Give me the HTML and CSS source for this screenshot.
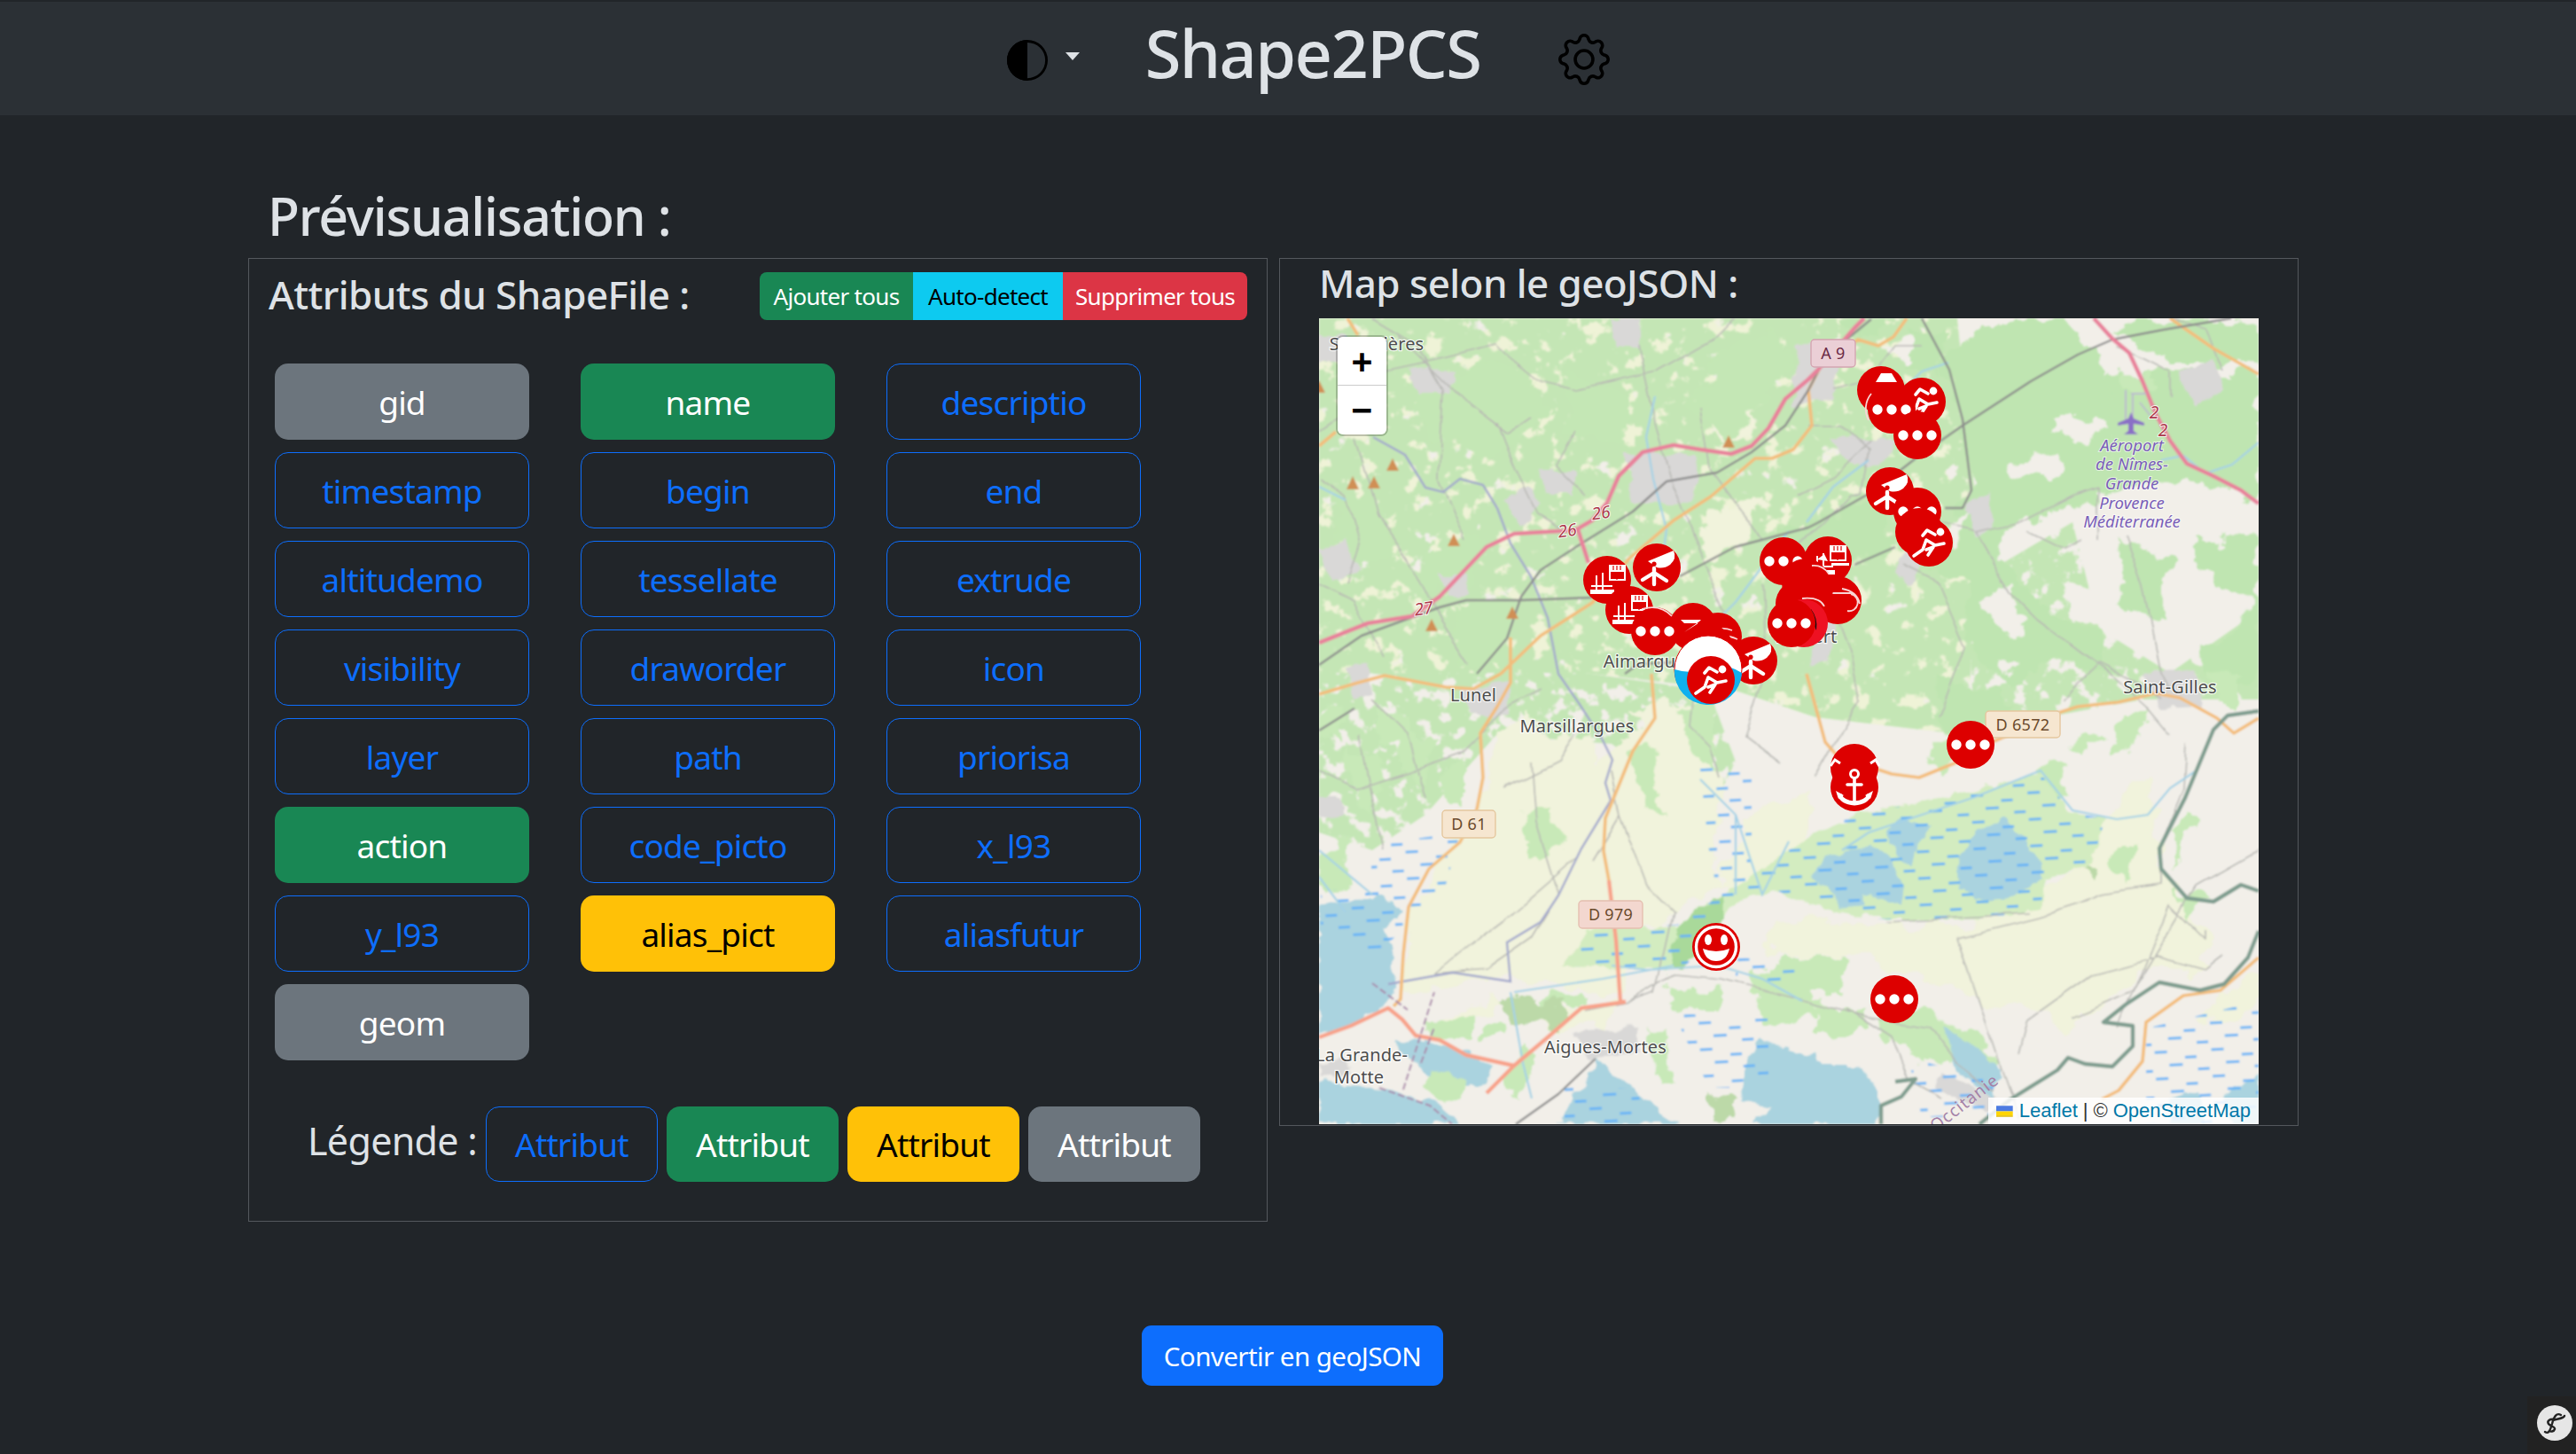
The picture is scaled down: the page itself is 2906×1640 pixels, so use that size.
FILE: index.html
```html
<!DOCTYPE html>
<html lang="fr">
<head>
<meta charset="utf-8">
<title>Shape2PCS</title>
<link rel="stylesheet" href="styles.css">
</head>
<body>
<nav class="topbar">
  <div class="theme">
    <svg class="half" viewBox="0 0 16 16" fill="currentColor"><path d="M8 1A7 7 0 1 1 8 15zM8 16A8 8 0 1 0 8 0a8 8 0 0 0 0 16zM8 1A7 7 0 1 0 8 15z" fill-rule="evenodd"/><path d="M8 0a8 8 0 0 0 0 16z"/></svg>
    <span class="caret"></span>
  </div>
  <h1 class="brand">Shape2PCS</h1>
  <svg class="gear" viewBox="0 0 16 16" fill="currentColor"><path d="M8 4.754a3.246 3.246 0 1 0 0 6.492 3.246 3.246 0 0 0 0-6.492zM5.754 8a2.246 2.246 0 1 1 4.492 0 2.246 2.246 0 0 1-4.492 0z"/><path d="M9.796 1.343c-.527-1.79-3.065-1.79-3.592 0l-.094.319a.873.873 0 0 1-1.255.52l-.292-.16c-1.64-.892-3.433.902-2.54 2.541l.159.292a.873.873 0 0 1-.52 1.255l-.319.094c-1.79.527-1.79 3.065 0 3.592l.319.094a.873.873 0 0 1 .52 1.255l-.16.292c-.892 1.64.901 3.434 2.541 2.54l.292-.159a.873.873 0 0 1 1.255.52l.094.319c.527 1.79 3.065 1.79 3.592 0l.094-.319a.873.873 0 0 1 1.255-.52l.292.16c1.64.893 3.434-.902 2.54-2.541l-.159-.292a.873.873 0 0 1 .52-1.255l.319-.094c1.79-.527 1.79-3.065 0-3.592l-.319-.094a.873.873 0 0 1-.52-1.255l.16-.292c.893-1.64-.902-3.433-2.541-2.54l-.292.159a.873.873 0 0 1-1.255-.52l-.094-.319zm-2.633.283c.246-.835 1.428-.835 1.674 0l.094.319a1.873 1.873 0 0 0 2.693 1.115l.291-.16c.764-.415 1.6.42 1.184 1.185l-.159.292a1.873 1.873 0 0 0 1.116 2.692l.318.094c.835.246.835 1.428 0 1.674l-.319.094a1.873 1.873 0 0 0-1.115 2.693l.16.291c.415.764-.42 1.6-1.185 1.184l-.291-.159a1.873 1.873 0 0 0-2.693 1.116l-.094.318c-.246.835-1.428.835-1.674 0l-.094-.319a1.873 1.873 0 0 0-2.692-1.115l-.292.16c-.764.415-1.6-.42-1.184-1.185l.159-.291A1.873 1.873 0 0 0 1.945 8.93l-.319-.094c-.835-.246-.835-1.428 0-1.674l.319-.094A1.873 1.873 0 0 0 3.06 4.377l-.16-.292c-.415-.764.42-1.6 1.185-1.184l.292.159a1.873 1.873 0 0 0 2.692-1.115l.094-.319z"/></svg>
</nav>

<main class="page">
  <h2 class="page-title">Prévisualisation :</h2>
  <div class="panels">
    <section class="panel panel-attrs">
      <header class="attrs-head">
        <h3 class="panel-title attrs-title">Attributs du ShapeFile :</h3>
        <div class="btn-group">
          <button class="sm sm-green">Ajouter tous</button><button class="sm sm-cyan">Auto-detect</button><button class="sm sm-red">Supprimer tous</button>
        </div>
      </header>
      <div class="attr-grid">
        <button class="btn btn-grey">gid</button>
        <button class="btn btn-green">name</button>
        <button class="btn btn-line">descriptio</button>
        <button class="btn btn-line">timestamp</button>
        <button class="btn btn-line">begin</button>
        <button class="btn btn-line">end</button>
        <button class="btn btn-line">altitudemo</button>
        <button class="btn btn-line">tessellate</button>
        <button class="btn btn-line">extrude</button>
        <button class="btn btn-line">visibility</button>
        <button class="btn btn-line">draworder</button>
        <button class="btn btn-line">icon</button>
        <button class="btn btn-line">layer</button>
        <button class="btn btn-line">path</button>
        <button class="btn btn-line">priorisa</button>
        <button class="btn btn-green">action</button>
        <button class="btn btn-line">code_picto</button>
        <button class="btn btn-line">x_l93</button>
        <button class="btn btn-line">y_l93</button>
        <button class="btn btn-yellow">alias_pict</button>
        <button class="btn btn-line">aliasfutur</button>
        <button class="btn btn-grey">geom</button>
      </div>
      <div class="legend">
        <span class="legend-label">Légende :</span>
        <button class="btn legend-btn btn-line">Attribut</button>
        <button class="btn legend-btn btn-green">Attribut</button>
        <button class="btn legend-btn btn-yellow">Attribut</button>
        <button class="btn legend-btn btn-grey">Attribut</button>
      </div>
    </section>

    <section class="panel panel-map">
      <h3 class="panel-title map-title">Map selon le geoJSON :</h3>
      <div class="map">
        <svg class="map-svg" viewBox="0 0 1060 909" xmlns="http://www.w3.org/2000/svg">
          <defs>
            <filter id="soft" filterUnits="userSpaceOnUse" x="0" y="0" width="1060" height="909"><feGaussianBlur stdDeviation="0.8"/></filter>
            <filter id="rough" filterUnits="userSpaceOnUse" x="0" y="0" width="1060" height="909">
              <feTurbulence type="fractalNoise" baseFrequency="0.035" numOctaves="4" seed="7" result="n"/>
              <feDisplacementMap in="SourceGraphic" in2="n" scale="34" xChannelSelector="R" yChannelSelector="G"/>
            </filter>
            <filter id="rough2" filterUnits="userSpaceOnUse" x="0" y="0" width="1060" height="909">
              <feTurbulence type="fractalNoise" baseFrequency="0.05" numOctaves="3" seed="3" result="n"/>
              <feDisplacementMap in="SourceGraphic" in2="n" scale="14" xChannelSelector="R" yChannelSelector="G"/>
            </filter>
            <filter id="rough3" filterUnits="userSpaceOnUse" x="0" y="0" width="1060" height="909">
              <feTurbulence type="fractalNoise" baseFrequency="0.02" numOctaves="2" seed="9" result="n"/>
              <feDisplacementMap in="SourceGraphic" in2="n" scale="12" xChannelSelector="R" yChannelSelector="G"/>
            </filter>
            <filter id="mosaic" filterUnits="userSpaceOnUse" x="0" y="0" width="1060" height="909">
              <feTurbulence type="fractalNoise" baseFrequency="0.05" numOctaves="5" seed="11"/>
              <feColorMatrix type="matrix" values="0 0 0 0 0.55  0 0 0 0 0.79  0 0 0 0 0.46  12 0 0 0 -3.9"/>
            </filter>
            <filter id="mosaic2" filterUnits="userSpaceOnUse" x="0" y="0" width="1060" height="909">
              <feTurbulence type="fractalNoise" baseFrequency="0.03" numOctaves="4" seed="4"/>
              <feColorMatrix type="matrix" values="0 0 0 0 0.86  0 0 0 0 0.9  0 0 0 0 0.68  12 0 0 0 -3.6"/>
            </filter>
            <filter id="mosaic3" filterUnits="userSpaceOnUse" x="0" y="0" width="1060" height="909">
              <feTurbulence type="fractalNoise" baseFrequency="0.06" numOctaves="4" seed="21"/>
              <feColorMatrix type="matrix" values="0 0 0 0 0.55  0 0 0 0 0.79  0 0 0 0 0.46  12 0 0 0 -4.4"/>
            </filter>
            <clipPath id="clipNorth"><path d="M0 0H720L740 200 735 400 730 470 560 450 470 420 300 400 0 400Z"/></clipPath>
            <clipPath id="clipMid"><path d="M0 400H300L440 420 470 500 440 560 330 480 200 470 120 560 60 600 0 580ZM850 230 880 350 960 400 1060 330 1060 430 930 430 820 450 740 470 730 300Z"/></clipPath>
            <pattern id="marsh" width="64" height="30" patternUnits="userSpaceOnUse" patternTransform="rotate(-3)">
              <rect x="2" y="5" width="14" height="2.8" class="dash"/><rect x="36" y="12" width="13" height="2.8" class="dash"/><rect x="18" y="20" width="15" height="2.8" class="dash"/><rect x="50" y="26" width="13" height="2.8" class="dash"/>
            </pattern>
            <g id="m-plain"><circle r="27" class="mk"/></g>
            <g id="m-dots"><circle r="27" class="mk"/><circle cx="-16" r="5.7" class="w"/><circle r="5.7" class="w"/><circle cx="16" r="5.7" class="w"/></g>
            <g id="m-scope"><circle r="27" class="mk"/><path class="w" d="M-10-7 19-19Q23-10 15-3 8 2 0 0Z"/><circle cx="-3" cy="-4" r="2.6" class="mk"/><path class="wl2" d="M-3 1V19M-3 6-16 14M-3 6 11 15"/></g>
            <g id="m-run"><circle r="27" class="mk"/><circle cx="13" cy="-12" r="4.4" class="w"/><path class="wl" d="M-7-8-2-14 7-9M-17 15-7 8-3-3 7 3 17 1M-3 8 5 5 -1 14"/></g>
            <g id="m-factory"><circle r="27" class="mk"/><path class="w" d="M-19 11H8V16H-19ZM-13 -5H-11V11H-13ZM-6 -8H-4V11H-6ZM-18 6H6V8H-18Z"/><path class="w" d="M2-17H21V1H2ZM4-9H19V-1H4Z" fill-rule="evenodd"/><path class="mkl" d="M7-16V-11M11-16V-11M15-16V-11M11-7V0"/></g>
            <g id="m-anchor"><circle r="27" class="mk"/><circle cy="-15" r="4.5" class="wo"/><path class="wl" d="M0-10V17M-8-3H8"/><path class="wo2" d="M-17 8Q-14 17 0 18 14 17 17 8"/><path class="w" d="M-21 4-12 9-18 13ZM21 4 12 9 18 13Z"/></g>
            <g id="m-smile"><circle r="27" class="mk"/><circle r="22.5" class="wo3"/><ellipse cx="-9" cy="-8" rx="4" ry="6" class="w"/><ellipse cx="9" cy="-8" rx="4" ry="6" class="w"/><path class="w" d="M-15 2Q0 8 15 2 12 16 0 16-12 16-15 2Z"/></g>
          </defs>

          <g class="tiles" filter="url(#soft)">
            <rect width="1060" height="909" class="land"/>
            <!-- mosaics -->
            <g clip-path="url(#clipNorth)"><rect width="1060" height="909" filter="url(#mosaic2)"/></g>
            <g clip-path="url(#clipNorth)"><rect width="1060" height="909" filter="url(#mosaic)"/></g>
            <g clip-path="url(#clipMid)"><rect width="1060" height="909" filter="url(#mosaic3)"/></g>
            <g filter="url(#rough)">
            <!-- farmland -->
            <path class="farm" d="M95 700 130 620 180 560 200 470 230 440 255 470 300 470 320 500 340 480 390 440 440 470 455 540 450 640 400 675 345 690 375 700 340 760 200 745 100 760ZM512 680 740 685 815 645 860 610 885 560 935 520 948 620 975 655 1000 690 1000 735 930 735 885 775 850 800 720 760 620 720 512 720Z"/>
            <path class="farm" d="M480 565 552 530 552 600 470 650 450 640ZM345 440 420 430 450 470 380 470ZM1000 790 1060 730 1060 770 1000 800ZM120 800 200 760 210 770 130 820ZM230 790 340 770 330 800 260 800ZM440 220 500 200 480 260 430 270ZM440 100 500 70 490 130 450 140Z"/>
            <!-- forests -->
            <path class="forest" d="M730 21 787 1 841 1 891 68 895 194 849 214 791 228 761 258 780 281 810 318 856 348 879 358 895 398 818 388 780 414 738 381 726 298 680 281 722 228 711 214 738 194 726 114 703 48Z"/>
            <path class="forest" d="M890 60 971 58 1060 68 1060 208 1009 188 971 181 895 194ZM987 254 1060 241 1060 314 1009 301ZM900 10 1000 0 1060 10 1060 50 960 50Z"/>
            <path class="forest" d="M512 248 627 198 650 254 604 281 560 300 512 290ZM665 14 703 14 703 58 665 58ZM990 370 1040 350 1060 370 1040 410 1000 410ZM1030 60 1060 60 1060 120 1030 100ZM900 250 960 270 950 340 905 330ZM575 0 640 0 640 20 590 20ZM1030 360 1060 300 1060 400 1030 420ZM700 410 760 420 790 440 720 470 690 440Z"/>
            <path class="forest-soft" d="M20 200 70 190 80 260 30 290ZM110 60 220 50 260 110 190 160 120 130ZM280 60 350 90 340 140 280 130ZM440 40 520 10 530 60 470 100ZM120 270 190 240 170 300 120 310ZM410 90 470 60 510 90 460 140ZM160 320 220 320 210 395 150 395Z"/>
            <path class="land" d="M780 161 833 158 833 178 790 178ZM830 114 885 114 895 128 860 140 830 128ZM640 30 670 20 670 50ZM775 300 800 340 770 360 750 320ZM850 300 880 310 880 350 850 340ZM740 220 700 240 720 260ZM780 380 790 395 770 400ZM950 210 980 200 970 240 945 240Z"/>
            <!-- south fields -->
            <path class="field" d="M117 788 178 790 178 814 120 814ZM392 748 453 758 453 788 400 780ZM484 734 552 730 552 790 500 800ZM520 721 589 721 589 768 520 768ZM550 774 619 780 619 808 560 808ZM627 768 680 775 742 834 700 850 640 810ZM680 790 730 800 770 840 745 860 700 830ZM250 765 300 760 300 775 250 785ZM190 795 206 795 206 810 190 810ZM230 820 252 835 230 880 205 870ZM370 800 390 810 400 860 385 860ZM910 60 940 60 940 80 910 80Z"/>
            <path class="field-dark" d="M208 768 270 770 270 798 210 795ZM440 870 470 875 470 900 440 900ZM860 620 880 620 870 640Z"/>
            <path class="field" d="M810 510 830 500 850 540 820 570ZM895 600 930 590 910 640 900 620ZM970 560 990 570 960 620ZM1000 400 1040 400 1040 440 1010 440ZM690 480 720 470 740 500 700 510ZM900 440 940 440 930 480 900 490ZM840 480 880 470 860 500ZM965 650 1000 650 980 680ZM90 470 130 480 120 520 95 510ZM140 510 165 500 165 550 145 550ZM230 560 260 550 270 600 240 610ZM350 490 375 480 390 560 360 540Z"/>
            <path class="field" d="M0 600 30 590 40 640 0 650ZM0 430 30 440 20 480 0 470ZM30 480 70 500 60 560 40 540ZM60 440 100 450 90 480 70 480ZM405 440 440 430 450 510 420 500Z"/>
            </g>
            <g filter="url(#rough2)">
            <!-- urban -->
            <path class="urban" d="M160 420 215 410 215 445 170 450ZM327 1 361 1 361 31 335 31ZM250 171 289 171 289 198 255 198ZM346 154 430 154 420 208 355 208ZM136 288 166 288 166 314 145 314ZM654 274 660 262 680 275 665 300 650 290ZM930 400 990 395 995 438 950 440ZM290 805 360 800 360 830 300 835ZM540 30 590 30 580 90 535 100ZM0 20 30 20 30 50 0 50ZM0 260 30 250 45 285 15 295ZM210 205 235 190 250 210 225 235ZM555 350 585 340 575 385 555 395ZM30 395 55 390 60 425 40 432ZM575 135 650 138 635 165 600 165ZM730 210 755 195 760 235 740 250ZM0 540 25 540 25 560 0 565ZM970 60 1005 45 1020 80 985 100ZM700 850 765 878 750 895 695 868ZM0 840 30 833 35 855 0 858ZM100 55 155 62 145 85 110 85Z"/>
            <!-- wetlands -->
            <path class="wet" d="M453 651 512 614 550 584 604 561 703 541 814 514 849 558 887 564 872 614 837 628 818 634 814 668 742 678 627 678 558 661 512 644 470 660 411 734 273 731 304 691 404 684Z"/>
            <path class="wet-dark" d="M404 684 454 651 457 678 411 734 396 732Z"/>
            <!-- water -->
            <path class="water" d="M0 664 40 654 71 653 94 668 74 691 86 718 82 764 48 794 0 808ZM0 861 67 868 132 884 159 909 0 909ZM82 814 120 815 151 824 197 841 189 864 166 868 140 860 115 850 96 830ZM312 834 354 868 404 909 270 909 285 880 305 855ZM495 811 549 831 562 824 566 844 604 844 623 861 634 884 627 909 490 909 510 888 476 881 480 850ZM554 634 573 608 619 593 642 608 659 634 657 664 634 654 615 649 615 661 585 664 577 644ZM640 578 657 566 692 574 677 591 669 618 650 604ZM719 608 742 578 772 564 788 581 814 614 814 634 780 654 742 658 721 638ZM705 800 745 825 770 850 760 880 720 850ZM1020 880 1060 850 1060 909 1030 909ZM960 880 990 870 1000 909 960 909Z"/>
            <path class="field" d="M125 845 168 860 160 880 140 885 120 870Z"/>
            </g>
            <path class="marsh" d="M453 651 512 614 550 584 604 561 703 541 814 514 849 558 887 564 872 614 837 628 818 634 814 668 742 678 627 678 558 661 512 644 470 660 411 734 273 731 304 691 404 684ZM430 508 488 500 488 640 450 651 440 600ZM400 784 507 790 507 868 440 868ZM59 594 159 580 140 650 110 680 59 658ZM2 648 90 630 95 690 60 720 2 684ZM277 868 358 868 370 908 277 908ZM665 834 761 860 761 901 680 901ZM933 801 1060 770 1060 909 933 909ZM470 720 550 730 530 750 470 745Z"/>
            <!-- minor roads -->
            <g class="minor" filter="url(#rough3)">
              <path d="M0 130 30 110 70 60 140 45 200 30 250 70 290 80 380 60 450 20 470 0M360 30 380 120 400 190 440 290 470 360 490 395M60 0 110 30 140 80M90 20 130 60 170 100 210 130 240 110M140 80 135 180 165 250M40 135 65 220 100 270 130 330 170 390M0 180 30 200 45 250 30 300M200 120 220 170 245 220 270 235M290 130 270 170 300 200M430 100 440 170 470 210 500 250M0 300 40 320 70 380M580 80 620 70 650 30 680 30M552 120 590 120 620 150 612 200 600 200 560 240 528 260M540 200 580 180 620 140M660 210 700 230 740 240 790 230 850 200 880 190M800 240 840 260 860 250M880 190 880 250M740 240 780 310 810 340 850 370 890 400 935 440 960 470M910 245 930 300 950 400 960 420M570 300 600 380 610 430 560 520M660 280 700 300 730 370 700 450M840 430 880 390 920 410 950 430M960 0 1000 10 1020 60M900 30 960 60 960 90M1060 600 990 640 960 690 930 740 900 800M500 300 505 390 480 470 520 500M0 510 40 530 70 520 120 505 160 490M120 540 100 470 60 430M45 470 70 600M160 490 210 440 250 420M210 530 270 500 290 470M240 500 245 570 270 650 240 700 190 735 130 740M130 740 180 700 220 670 290 610M310 610 340 560 330 510M340 560 370 640 400 670 380 760 350 770 300 780M350 770 400 740 454 745 552 770 620 790 690 800 720 840 760 870M452 520 440 480 420 460 430 380M790 830 800 790 870 740 945 720 1000 735 1020 720M850 790 920 760 960 660 1000 700 1000 690M720 700 820 675 880 650 950 640 950 590 975 530 978 480M640 680 800 672M595 780 645 812 664 860 700 880M720 700 770 850 790 905"/>
            </g>
            <g class="river">
              <path d="M379 88 369 134 377 181 392 238 385 290M530 240 500 280 470 320 450 340M620 160 580 190 550 230M710 50 680 60 650 90M590 600 620 580 740 540 814 510 850 555 900 565 935 560 960 530 990 510M0 600 60 650M240 880 230 840 216 760M470 560 470 650M0 630 30 670M330 730 370 735 450 730 500 745 545 770M220 760 320 745 400 730M430 520 470 560 500 650 530 590M1060 140 1030 165 1000 175 975 155 950 160M30 20 40 60M0 190 30 205"/>
            </g>
            <g class="canal"><path d="M61 134 97 154 120 191 140 196 159 181 185 188 201 214 216 254 239 291 258 338 270 401 293 434 319 474 331 498 323 524 329 544 296 598 270 651 250 681 212 704 216 748 151 738 78 751"/></g>
            <!-- trunk, secondary, rail -->
            <g class="sec">
              <path d="M32 0 44 19M0 144 19 128M205 401 250 358 308 321 350 271 400 228 442 201 492 158 511 158 535 148 556 121 552 81 566 54 608 24 631 31 648 21 663 0M0 424 44 411 74 403 143 416 174 418 205 401M216 360 216 411 201 438 182 468 185 518 178 554 159 591 124 621 101 664 95 718 92 768 84 776M375 401 379 451 354 488 323 564 321 601 327 634M550 401 571 478 585 494 646 514 677 518 719 501 757 479 837 444 856 438 902 433 944 423 971 428 1013 451 1032 468 1060 451M1060 721 1017 758 975 764 933 794 929 838 902 871 883 881M960 0 1009 34 1060 63"/>
            </g>
            <g class="pri">
              <path d="M0 811 36 798 78 778 94 791 109 809 136 814 166 831 220 843 258 811 296 778 346 771M220 843 189 874M327 634 335 701 340 771 346 771"/>
            </g>
            <g class="rail">
              <path d="M0 391 48 358 136 326 166 318 228 318 308 315M178 401 212 361 228 314 250 284 296 254 354 218 392 184 449 174 488 151 526 121 541 98 552 81 566 54 600 20 623 1M407 291 469 258 552 236 562 231 627 194 673 158 726 121 803 71 856 41 895 24 952 13 1029 0M680 0 711 58 726 114 736 194 726 214 706 214M604 278 650 258M345 401 360 390 400 388M0 465 40 440M312 835 270 875 222 909"/>
            </g>
            <g class="motor">
              <path d="M0 366 55 344 105 336 136 314 189 258 220 243 289 239 308 228 325 208 338 178 365 151 400 143 430 148 465 153 488 144 507 124 526 91 552 69 562 59 604 11 615 0M292 238 304 276M874 0 895 23 914 39 929 71 944 108 960 138 979 164 1009 178 1040 194 1060 209"/>
            </g>
            <g class="rhone">
              <path d="M1060 443 1025 448 1009 464 977 541 948 598 950 621 979 654 1009 658 1040 639 1060 646M1060 691 1048 721 1021 751 994 758 948 749 910 774 885 794 918 798 918 821 895 844 864 841 845 834 833 848 780 881 745 909M650 861 673 858 657 878 634 888 634 909"/>
            </g>
            <g class="boundary"><path d="M95 870 130 760M60 750 100 780M115 840 130 800M68 868 125 888 150 909"/></g>
            <!-- peaks -->
            <g class="peak"><path d="M83 158 90 172H76ZM38 178 45 193H31ZM62 178 69 192H55ZM152 243 159 257H145ZM218 325 225 339H211ZM127 339 134 353H120ZM462 132 469 146H455ZM0 70 7 84H-7Z"/></g>
            <!-- airport -->
            <path class="apron" d="M910 81V120M918 85V120M926 95 938 110M916 85H933"/>
            <path class="plane" d="M916 106 919 113 931 118V121L919 119V127L924 131H908L913 127V119L901 121V118L913 113Z"/>
          </g>

          <!-- shields -->
          <g class="shield-a"><rect x="555" y="24" width="50" height="31" rx="4"/></g>
          <text class="sh sh-a" x="580" y="46">A 9</text>
          <rect class="shield-d" x="752" y="443" width="84" height="30" rx="4"/><text class="sh sh-d" x="794" y="465">D 6572</text>
          <rect class="shield-d" x="139" y="555" width="60" height="31" rx="4"/><text class="sh sh-d" x="169" y="577">D 61</text>
          <rect class="shield-p" x="293" y="657" width="72" height="31" rx="4"/><text class="sh sh-d" x="329" y="679">D 979</text>

          <!-- labels -->
          <g class="lbl">
            <text x="65" y="36">Sommières</text>
            <text x="174" y="432">Lunel</text>
            <text x="291" y="467">Marsillargues</text>
            <text x="372" y="394">Aimargues</text>
            <text x="548" y="366">Vauvert</text>
            <text x="960" y="423">Saint-Gilles</text>
            <text x="323" y="829">Aigues-Mortes</text>
            <text x="48" y="838">La Grande-</text>
            <text x="45" y="863">Motte</text>
          </g>
          <g class="air">
            <text x="917" y="150">Aéroport</text><text x="917" y="171">de Nîmes-</text><text x="917" y="193">Grande</text><text x="917" y="215">Provence</text><text x="917" y="236">Méditerranée</text>
          </g>
          <g class="num">
            <text x="319" y="226" transform="rotate(-8 319 226)">26</text><text x="281" y="246" transform="rotate(-8 281 246)">26</text><text x="119" y="334" transform="rotate(-8 119 334)">27</text><text x="942" y="113">2</text><text x="952" y="133">2</text>
          </g>
          <text class="region" x="732" y="890" transform="rotate(-38 732 890)">Occitanie</text>

          <!-- markers -->
          <g class="markers">
            <use href="#m-plain" x="634" y="81"/>
            <path class="w" d="M628 72 634 62H646L652 72Z"/>
            <use href="#m-run" x="680" y="94"/>
            <use href="#m-dots" x="646" y="103"/>
            <path class="arc" d="M620 115A27 27 0 0 1 623 85"/>
            <use href="#m-dots" x="675" y="132"/>
            <use href="#m-scope" x="644" y="195"/>
            <use href="#m-dots" x="675" y="218"/>
            <use href="#m-plain" x="677" y="241"/>
            <use href="#m-run" x="688" y="253"/>
            <use href="#m-dots" x="524" y="274"/>
            <use href="#m-factory" x="574" y="273"/>
            <path class="w" d="M562 272 570 266 574 274ZM578 276H598V279H578Z"/>
            <use href="#m-scope" x="381" y="281"/>
            <use href="#m-factory" x="325" y="295"/>
            <use href="#m-plain" x="549" y="298"/>
            <use href="#m-plain" x="585" y="318"/>
            <path class="arc" d="M590 305Q607 308 610 322M578 310H602M600 311A9 9 0 1 1 596 330"/>
            <use href="#m-plain" x="553" y="305"/>
            <use href="#m-plain" x="542" y="322"/>
            <path class="arc" d="M556 279Q568 278 575 288M545 316Q565 314 570 325"/>
            <circle cx="547" cy="344" r="27" class="mk-bright"/>
            <path class="blk" d="M555 328Q563 338 561 352 558 344 553 340Z"/>
            <use href="#m-dots" x="533" y="344"/>
            <use href="#m-factory" x="350" y="329"/>
            <use href="#m-plain" x="422" y="348"/>
            <path class="w" d="M408 340H432L412 354 428 344H412Z"/>
            <use href="#m-dots" x="379" y="353"/>
            <path class="arc" d="M364 328Q385 322 398 336"/>
            <use href="#m-plain" x="450" y="359"/>
            <path class="arc" d="M427 362Q448 345 466 352 M430 367Q450 352 472 362"/>
            <use href="#m-plain" x="440" y="372"/>
            <use href="#m-scope" x="490" y="386"/>
            <circle cx="439" cy="396" r="38" class="wfill"/>
            <path class="blue" d="M401 396Q420 402 435 395 455 386 477 400A38 38 0 0 1 401 396Z"/>
            <use href="#m-run" x="442" y="408"/>
            <use href="#m-plain" x="604" y="507"/>
            <path class="arc3" d="M577 505 582 498 588 502M622 502 628 498 632 505"/>
            <use href="#m-anchor" x="604" y="529"/>
            <use href="#m-dots" x="735" y="481"/>
            <use href="#m-smile" x="448" y="709"/>
            <use href="#m-dots" x="649" y="768"/>
          </g>
        </svg>

        <div class="zoom-ctl">
          <span class="zoom-btn">+</span>
          <span class="zoom-btn">−</span>
        </div>
        <div class="attribution">
          <svg class="flag" viewBox="0 0 12 8"><path class="flag-b" d="M0 0h12v4H0z"/><path class="flag-y" d="M0 4h12v3H0z"/><path class="flag-o" d="M0 7h12v1H0z"/></svg>
          <span class="att-link">Leaflet</span><span class="att-sep">|</span><span>©</span><span class="att-link">OpenStreetMap</span>
        </div>
      </div>
    </section>
  </div>
  <div class="convert-row"><button class="convert">Convertir en geoJSON</button></div>
</main>

<div class="sf-toolbar">
  <svg class="sf-logo" viewBox="0 0 40 40"><circle cx="20" cy="20" r="20" class="sf-disc"/><path class="sf-s" d="M27 11C22 8 19 13 17 21 15 28 13 33 9 30M20 16C14 15 11 18 13 21 15 24 21 24 20 27 19 30 15 30 14 29M18 17C24 15 30 15 31 12"/></svg>
</div>
</body>
</html>
```

FILE: styles.css
```css
* { box-sizing: border-box; }
html, body { margin: 0; padding: 0; }
body {
  background: #212529;
  color: #dee2e6;
  font-family: "Noto Sans", "Open Sans", sans-serif;
  width: 2906px;
  height: 1640px;
  overflow: hidden;
  position: relative;
}
button { font-family: inherit; cursor: pointer; }

.topbar {
  height: 130px;
  background: #2b3035;
  border-top: 2px solid #212529;
  display: flex;
  align-items: center;
  justify-content: center;
  padding-left: 46px;
}
.theme { display: flex; align-items: center; color: #000; }
.half { width: 46px; height: 46px; display: block; margin-top: 4px; }
.caret {
  margin-left: 20px;
  margin-top: -6px;
  width: 0; height: 0;
  border-left: 8px solid transparent;
  border-right: 8px solid transparent;
  border-top: 9px solid #dee2e6;
}
.brand {
  margin: -12px 88px 0 74px;
  font-size: 74px;
  font-weight: 500;
  line-height: 1.2;
  letter-spacing: -1.6px;
}
.gear { width: 58px; height: 58px; color: #000; margin-top: 2px; }

.page { padding-left: 280px; }
.page-title {
  margin: 0;
  padding: 77px 0 0 22px;
  height: 161px;
  font-size: 59px;
  line-height: 72px;
  font-weight: 500;
  letter-spacing: -1.2px;
}
.panels { display: flex; align-items: flex-start; gap: 13px; }
.panel { border: 1px solid #54585d; width: 1150px; }
.panel-attrs { height: 1087px; padding: 15px 22px 0 29px; }
.panel-map { height: 979px; padding: 0 44px 0 44px; }
.panel-title {
  margin: 0;
  font-size: 44px;
  font-weight: 500;
  line-height: 53px;
  letter-spacing: -0.6px;
  white-space: nowrap;
}
.attrs-title { margin-top: -3px; }
.attrs-head {
  display: flex;
  justify-content: space-between;
  align-items: center;
  margin-left: -7px;
  height: 54px;
}
.btn-group { display: flex; }
.sm {
  height: 54px;
  border: 0;
  font-size: 26px;
  padding: 0;
  letter-spacing: -0.7px;
}
.sm-green { width: 173px; background: #198754; color: #fff; border-radius: 8px 0 0 8px; }
.sm-cyan { width: 169px; background: #0dcaf0; color: #000; }
.sm-red { width: 208px; background: #dc3545; color: #fff; border-radius: 0 8px 8px 0; }

.attr-grid {
  display: grid;
  grid-template-columns: repeat(3, 287px);
  grid-auto-rows: 86px;
  column-gap: 58px;
  row-gap: 14px;
  margin-top: 49px;
}
.btn {
  border-radius: 15px;
  font-size: 37px;
  border: 2px solid transparent;
  letter-spacing: -0.8px;
  padding: 0;
}
.btn-line { background: transparent; color: #0d6efd; border-color: #0d6efd; border-width: 1.5px; }
.btn-green { background: #198754; color: #fff; }
.btn-grey { background: #6c757d; color: #fff; }
.btn-yellow { background: #ffc107; color: #000; }

.legend { display: flex; align-items: center; gap: 10px; margin: 52px 0 0 37px; height: 85px; }
.legend-label {
  font-size: 43px;
  letter-spacing: -0.7px;
  margin-right: 1px;
  width: 190px;
  white-space: nowrap;
  margin-top: -8px;
}
.legend-btn { width: 194px; height: 85px; }

.map-title { height: 67px; color: #dee2e6; padding-top: 1px; }
.map { position: relative; width: 1060px; height: 909px; overflow: hidden; background: #f2efe9; }
.map-svg { display: block; width: 1060px; height: 909px; }

.land { fill: #f2efe9; }
.farm { fill: #f1f3dc; }
.forest { fill: #bfe5b1; }
.forest-soft { fill: #c4e7b5; }
.field { fill: #c8e9b8; }
.field-dark { fill: #bcd9a8; }
.urban { fill: #d9d8d7; }
.wet { fill: #d3ecc0; }
.wet-dark { fill: #a9d99a; }
.water { fill: #aad3df; }
.marsh { fill: url(#marsh); }
.dash { fill: #64b2f7; }
.minor path { fill: none; stroke: #b8b8b4; stroke-width: 1.6; stroke-linejoin: round; }
.river path { fill: none; stroke: #a5d2e6; stroke-width: 2.2; }
.canal path { fill: none; stroke: #a3a8cc; stroke-width: 2.4; }
.sec path { fill: none; stroke: #f3bd7c; stroke-width: 3.6; stroke-linejoin: round; }
.pri path { fill: none; stroke: #f8a28a; stroke-width: 4.4; stroke-linejoin: round; }
.rail path { fill: none; stroke: #8c8c8c; stroke-width: 2.4; stroke-linejoin: round; }
.motor path { fill: none; stroke: #e8829b; stroke-width: 4.6; stroke-linejoin: round; }
.rhone path { fill: none; stroke: #7f9d8f; stroke-width: 4.4; stroke-linejoin: round; }
.boundary path { fill: none; stroke: #a987a9; stroke-width: 2; stroke-dasharray: 8 3; }
.peak path { fill: #d08f55; }
.apron { fill: none; stroke: #bcbccd; stroke-width: 2; }
.plane { fill: #8a6fc6; }

.shield-a rect { fill: #ebcfd6; stroke: #d4a5b1; stroke-width: 1.4; }
.shield-d { fill: #f6e6d0; stroke: #e5c79e; stroke-width: 1.4; }
.shield-p { fill: #f3d7cf; stroke: #e5bfb0; stroke-width: 1.4; }
.sh { font-size: 18px; text-anchor: middle; font-family: "Noto Sans", sans-serif; letter-spacing: 0.3px; }
.sh-a { fill: #6b2a45; }
.sh-d { fill: #6a4a2c; }

.lbl text {
  font-size: 20px;
  text-anchor: middle;
  fill: #4d4d4d;
  stroke: rgba(255,255,255,0.75);
  stroke-width: 2.5px;
  paint-order: stroke;
  letter-spacing: 0.1px;
}
.air text {
  font-size: 18.5px;
  font-style: italic;
  text-anchor: middle;
  fill: #7a5fb8;
  stroke: rgba(255,255,255,0.6);
  stroke-width: 2px;
  paint-order: stroke;
}
.num text { font-size: 19px; font-style: italic; text-anchor: middle; fill: #ad3a4c; stroke: rgba(255,255,255,.8); stroke-width: 2px; paint-order: stroke; }
.region { font-size: 19px; fill: #a583a8; text-anchor: middle; letter-spacing: 1px; }

.mk { fill: #dd0000; }
.mk-bright { fill: #ee1122; }
.w { fill: #fff; }
.wl { fill: none; stroke: #fff; stroke-width: 3.6; stroke-linecap: round; stroke-linejoin: round; }
.wl2 { fill: none; stroke: #fff; stroke-width: 4.4; stroke-linecap: round; stroke-linejoin: round; }
.wo { fill: none; stroke: #fff; stroke-width: 3; }
.wo2 { fill: none; stroke: #fff; stroke-width: 5; }
.wo3 { fill: none; stroke: #fff; stroke-width: 3.4; }
.mkl { fill: none; stroke: #dd0000; stroke-width: 1.2; }
.arc { fill: none; stroke: #f9d4d4; stroke-width: 1.8; }
.arc3 { fill: none; stroke: #fff; stroke-width: 3; }
.blk { fill: #111; }
.wfill { fill: #fff; stroke: #dd0000; stroke-width: 1; }
.blue { fill: #10b0ee; }

.zoom-ctl {
  position: absolute;
  left: 19px;
  top: 19px;
  width: 59px;
  display: flex;
  flex-direction: column;
  border: 2px solid rgba(0,0,0,0.2);
  border-radius: 8px;
  background-clip: padding-box;
  font-family: "Liberation Sans", sans-serif;
}
.zoom-btn {
  height: 55px;
  background: #fff;
  color: #000;
  font-size: 41px;
  font-weight: 700;
  line-height: 56px;
  text-align: center;
}
.zoom-btn:first-child { border-bottom: 1px solid #ccc; border-radius: 6px 6px 0 0; }
.zoom-btn:last-child { border-radius: 0 0 6px 6px; }

.attribution {
  position: absolute;
  right: 0;
  bottom: 0;
  height: 30px;
  width: 305px;
  padding: 0 9px;
  display: flex;
  align-items: center;
  gap: 6px;
  background: rgba(255,255,255,0.82);
  color: #333;
  font-family: "Liberation Sans", sans-serif;
  font-size: 22px;
}
.flag { width: 22px; height: 15px; margin: 0 1px 0 0; }
.flag-b { fill: #4c7be1; }
.flag-y { fill: #ffd500; }
.flag-o { fill: #e0bc00; }
.att-link { color: #0078a8; }
.att-sep { color: #333; }

.convert-row { padding: 117px 0 0 1008px; }
.convert {
  width: 340px;
  height: 68px;
  border: 0;
  border-radius: 11px;
  background: #0d6efd;
  color: #fff;
  font-size: 29.6px;
  letter-spacing: -0.6px;
  padding: 0;
}

.sf-toolbar {
  position: absolute;
  right: 0;
  bottom: 0;
  width: 55px;
  height: 65px;
  background: #222;
  display: flex;
  justify-content: center;
  align-items: center;
}
.sf-logo { width: 40px; height: 40px; margin: 0 0 6px 6px; }
.sf-disc { fill: #e6e6e6; }
.sf-s { fill: none; stroke: #222; stroke-width: 2.4; stroke-linecap: round; }
```
